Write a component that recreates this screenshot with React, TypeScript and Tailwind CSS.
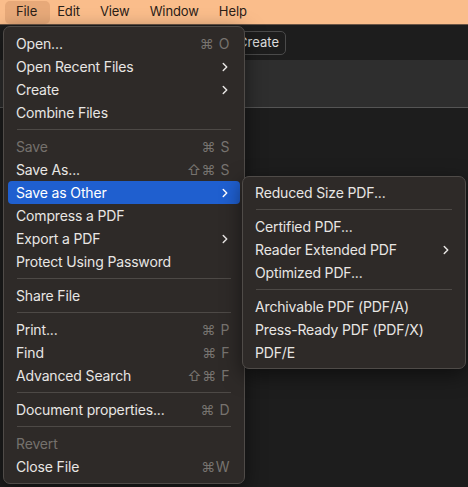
import { ChevronRight } from 'lucide-react';

type Item =
  | { sep: true }
  | { label: string; shortcut?: string; sub?: boolean; disabled?: boolean; active?: boolean };

const fileMenu: Item[] = [
  { label: 'Open...', shortcut: '⌘ O' },
  { label: 'Open Recent Files', sub: true },
  { label: 'Create', sub: true },
  { label: 'Combine Files' },
  { sep: true },
  { label: 'Save', shortcut: '⌘ S', disabled: true },
  { label: 'Save As...', shortcut: '⇧⌘ S' },
  { label: 'Save as Other', sub: true, active: true },
  { label: 'Compress a PDF' },
  { label: 'Export a PDF', sub: true },
  { label: 'Protect Using Password' },
  { sep: true },
  { label: 'Share File' },
  { sep: true },
  { label: 'Print...', shortcut: '⌘ P' },
  { label: 'Find', shortcut: '⌘ F' },
  { label: 'Advanced Search', shortcut: '⇧⌘ F' },
  { sep: true },
  { label: 'Document properties...', shortcut: '⌘ D' },
  { sep: true },
  { label: 'Revert', disabled: true },
  { label: 'Close File', shortcut: '⌘W' },
];

const otherMenu: Item[] = [
  { label: 'Reduced Size PDF...' },
  { sep: true },
  { label: 'Certified PDF...' },
  { label: 'Reader Extended PDF', sub: true },
  { label: 'Optimized PDF...' },
  { sep: true },
  { label: 'Archivable PDF (PDF/A)' },
  { label: 'Press-Ready PDF (PDF/X)' },
  { label: 'PDF/E' },
];

function MenuRows({ items }: { items: Item[] }) {
  return (
    <>
      {items.map((item, i) =>
        'sep' in item ? (
          <div key={i} className="h-[11px] flex items-center px-[9px]">
            <div className="h-px w-full bg-[#4d4946]" />
          </div>
        ) : (
          <div
            key={i}
            className={`h-[23px] flex items-center justify-between pl-[8px] pr-[10px] rounded-[4px] ${
              item.active ? 'bg-[#1f5fcf] text-white' : item.disabled ? 'text-[#75716d]' : 'text-[#e8e6e4]'
            }`}
          >
            <span className="tracking-[-0.15px]">{item.label}</span>
            {item.shortcut && <span className="text-[#77736f] tracking-[0.5px]">{item.shortcut}</span>}
            {item.sub && <ChevronRight className="w-[14px] h-[14px] -mr-[2px]" strokeWidth={2.5} />}
          </div>
        )
      )}
    </>
  );
}

export default function App() {
  return (
    <div
      className="relative w-[468px] h-[487px] bg-[#1d1d1d] overflow-hidden text-[14px]"
      style={{ fontFamily: 'Inter, "Liberation Sans", sans-serif' }}
    >
      {/* menu bar */}
      <div className="h-[25px] bg-[#fabd8b] border-b border-[#6b5545] flex items-center pl-[5px] gap-[20px] text-[13px] tracking-[-0.1px] text-[#2b2017]">
        <div className="h-[23px] pl-[11px] pr-[13px] -mr-[13px] flex items-center rounded-[5px] bg-[#e7a979]">File</div>
        <div>Edit</div>
        <div>View</div>
        <div>Window</div>
        <div>Help</div>
      </div>

      {/* app behind */}
      <div className="h-[35px] flex items-center pl-[200px]">
        <div className="w-[86px] h-[24px] pr-[6px] flex items-center justify-end border border-[#4a4a4a] rounded-[5px] text-[13px] text-[#dcdcdc]">
          Create
        </div>
      </div>
      <div className="h-[48px] bg-[#2e2e2e] border-b border-[#555]" />

      {/* File menu */}
      <div className="absolute left-[3px] top-[26px] w-[242px] py-[5px] px-[4px] rounded-[7px] bg-[#2e2a28] border border-[#4f4b48] shadow-[0_6px_20px_rgba(0,0,0,0.5)]">
        <MenuRows items={fileMenu} />
      </div>

      {/* Save as Other submenu */}
      <div className="absolute left-[242px] top-[176px] w-[224px] py-[4px] px-[4px] rounded-[7px] bg-[#2e2a28] border border-[#4f4b48] shadow-[0_6px_20px_rgba(0,0,0,0.5)]">
        <MenuRows items={otherMenu} />
      </div>
    </div>
  );
}
